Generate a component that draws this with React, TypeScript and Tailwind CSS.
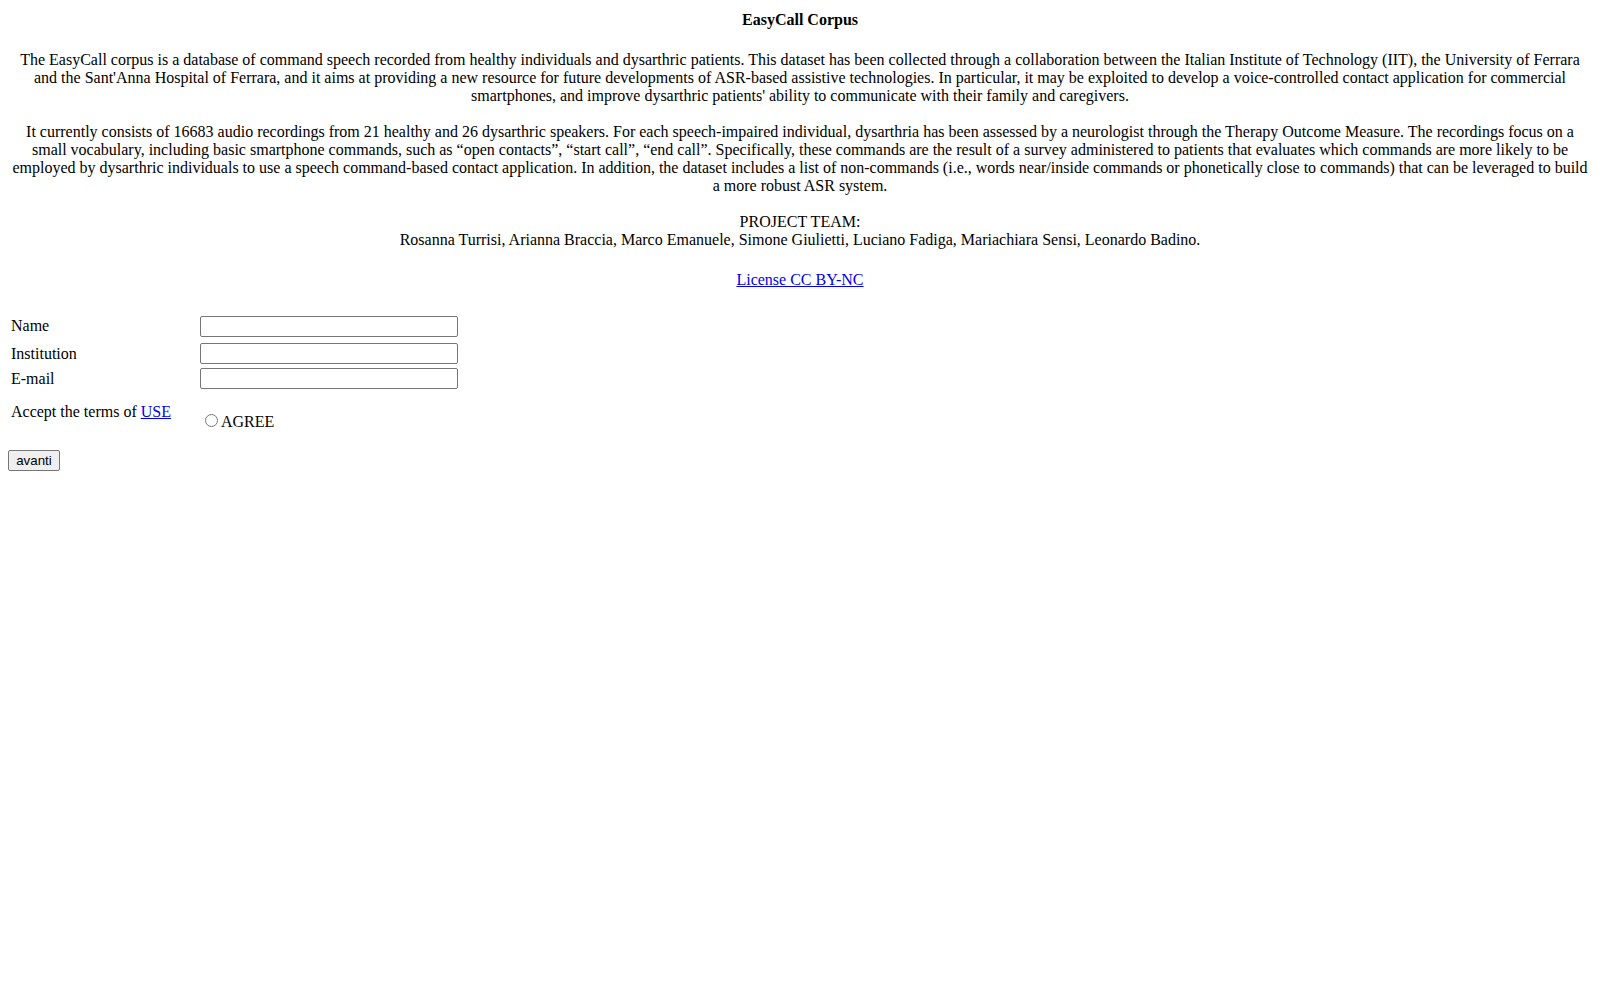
import { useState } from 'react'

const fields = [
  { label: 'Name', key: 'name', rowClass: 'h-[27px]', labelClass: 'mt-[1px]' },
  { label: 'Institution', key: 'institution', rowClass: 'h-[25px]', labelClass: 'mt-[2px]' },
  { label: 'E-mail', key: 'email', rowClass: 'h-[21px]', labelClass: 'mt-[2px]' },
]

export default function App() {
  const [form, setForm] = useState<Record<string, string>>({ name: '', institution: '', email: '' })
  const [agree, setAgree] = useState(false)

  return (
    <div className="min-h-screen bg-white text-black font-['Liberation_Serif',serif] text-[16px] leading-[18px]">
      <div className="px-[11px] pt-[11px] text-center">
        <b>EasyCall Corpus</b>
      </div>

      <div className="px-[11px] mt-[22px] text-center">
        <p>
          The EasyCall corpus is a database of command speech recorded from healthy individuals and dysarthric
          patients. This dataset has been collected through a collaboration between the Italian Institute of
          Technology (IIT), the University of Ferrara and the Sant'Anna Hospital of Ferrara, and it aims at providing
          a new resource for future developments of ASR-based assistive technologies. In particular, it may be
          exploited to develop a voice-controlled contact application for commercial smartphones, and improve
          dysarthric patients' ability to communicate with their family and caregivers.
        </p>
        <p className="mt-[18px]">
          It currently consists of 16683 audio recordings from 21 healthy and 26 dysarthric speakers. For each
          speech-impaired individual, dysarthria has been assessed by a neurologist through the Therapy Outcome
          Measure. The recordings focus on a small vocabulary, including basic smartphone commands, such as “open
          contacts”, “start call”, “end call”. Specifically, these commands are the result of a survey administered to
          patients that evaluates which commands are more likely to be employed by dysarthric individuals to use a
          speech command-based contact application. In addition, the dataset includes a list of non-commands (i.e.,
          words near/inside commands or phonetically close to commands) that can be leveraged to build a more robust
          ASR system.
        </p>
        <p className="mt-[18px]">
          PROJECT TEAM:
          <br />
          Rosanna Turrisi, Arianna Braccia, Marco Emanuele, Simone Giulietti, Luciano Fadiga, Mariachiara Sensi,
          Leonardo Badino.
        </p>
      </div>

      <div className="px-[11px] mt-[22px] text-center">
        <a href="#" className="text-[#0000ee] underline">
          License CC BY-NC
        </a>
      </div>

      {/* registration form */}
      <form className="mt-[27px]" onSubmit={(e) => e.preventDefault()}>
        <div className="px-[11px]">
          {fields.map((f) => (
            <div key={f.key} className={`flex items-start ${f.rowClass}`}>
              <div className={`w-[189px] ${f.labelClass}`}>{f.label}</div>
              <input
                type="text"
                value={form[f.key]}
                onChange={(e) => setForm({ ...form, [f.key]: e.target.value })}
                className="w-[258px] h-[21px] px-[2px] border border-[#767676] rounded-[2px] bg-white text-[13.333px] font-['Liberation_Sans',sans-serif] outline-none"
              />
            </div>
          ))}

          <div className="flex items-start h-[41px]">
            <div className="w-[189px] mt-[14px]">
              Accept the terms of{' '}
              <a href="#" className="text-[#0000ee] underline">
                USE
              </a>
            </div>
            <label className="flex items-start cursor-pointer">
              <input
                type="radio"
                checked={agree}
                onChange={() => setAgree(true)}
                className="w-[13px] h-[13px] mt-[25px] ml-[5px] mr-[3px]"
              />
              <span className="mt-[24px]">AGREE</span>
            </label>
          </div>
        </div>

        <div className="px-[8px] mt-[20px]">
          <button
            type="submit"
            className="w-[52px] h-[21px] border border-[#767676] rounded-[2px] bg-[#efefef] text-[13.333px] leading-[19px] font-['Liberation_Sans',sans-serif] text-black"
          >
            avanti
          </button>
        </div>
      </form>
    </div>
  )
}
